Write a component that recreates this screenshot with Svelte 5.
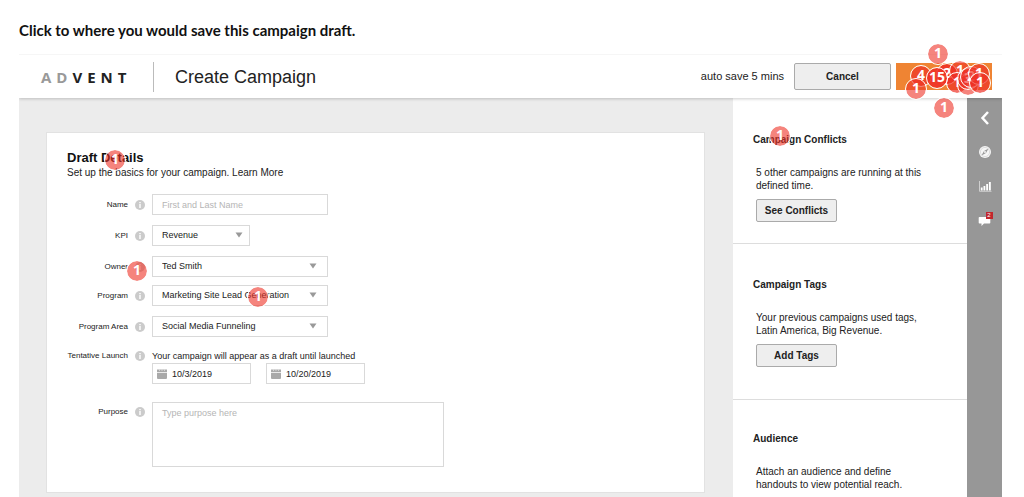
<script>
  const selects = [
    { id: 'kpi', label: 'KPI', value: 'Revenue', size: 'short', gap: 'g10' },
    { id: 'owner', label: 'Owner', value: 'Ted Smith', size: 'long', gap: 'g10' },
    { id: 'program', label: 'Program', value: 'Marketing Site Lead Generation', size: 'long', gap: 'g8' },
    { id: 'area', label: 'Program Area', value: 'Social Media Funneling', size: 'long', gap: 'g10' }
  ];

  // Click clusters: centre inside the frame, number of clicks, fill strength
  const clicks = [
    { x: 919, y: 0, n: 1, o: 0.6 },
    { x: 925, y: 54, n: 1, o: 0.6 },
    { x: 761, y: 82, n: 1, o: 0.6 },
    { x: 96, y: 106, n: 1, o: 0.6 },
    { x: 118, y: 217, n: 1, o: 0.6 },
    { x: 239, y: 243, n: 1, o: 0.6 },
    { x: 928, y: 20, n: 2, o: 0.9 },
    { x: 941, y: 17, n: 1, o: 0.6 },
    { x: 938, y: 29, n: 1, o: 0.7 },
    { x: 949, y: 31, n: 1, o: 0.6 },
    { x: 949, y: 25, n: 3, o: 0.7 },
    { x: 952, y: 23, n: 2, o: 0.6 },
    { x: 960, y: 20, n: 1, o: 0.7 },
    { x: 902, y: 22, n: 4, o: 0.7 },
    { x: 918, y: 24, n: 15, o: 0.9 },
    { x: 897, y: 35, n: 1, o: 0.6 },
    { x: 961, y: 29, n: 1, o: 0.7 }
  ];
</script>

{#snippet info()}
  <svg class="info" viewBox="0 0 10 10" aria-hidden="true">
    <circle cx="5" cy="5" r="5" fill="#cbcbcb" />
    <path d="M4.300 2h1.400v1.300H4.300zM4.300 4h1.400v4H4.300z" fill="#fff" />
  </svg>
{/snippet}

{#snippet calendar()}
  <svg class="calendar" viewBox="0 0 10 10" aria-hidden="true">
    <path d="M0 .5h10V3H0zM0 3.700h10V9a1 1 0 0 1-1 1H1a1 1 0 0 1-1-1z" fill="#a9a9a9" />
    <path d="M2.500 0v2M5 0v2M7.500 0v2" stroke="#ddd" stroke-width=".8" />
  </svg>
{/snippet}

<div class="page">
  <h1>Click to where you would save this campaign draft.</h1>

  <div class="frame">
    <header>
      <div class="logo"><span>AD</span>VENT</div>
      <h2>Create Campaign</h2>
      <span class="autosave">auto save 5 mins</span>
      <button class="cancel">Cancel</button>
      <button class="save" aria-label="Save"></button>
    </header>

    <div class="body">
      <main>
        <form class="card">
          <h3>Draft Details</h3>
          <p class="intro">Set up the basics for your campaign. <a href="#learn">Learn More</a></p>

          <div class="row">
            <label for="name">Name</label>
            {@render info()}
            <input id="name" class="long" type="text" placeholder="First and Last Name" />
          </div>

          {#each selects as s}
            <div class="row {s.gap}">
              <label for={s.id}>{s.label}</label>
              {@render info()}
              <div class="select {s.size}">
                <select id={s.id}><option>{s.value}</option></select>
                <svg viewBox="0 0 8 6" aria-hidden="true"><path d="M.5.5h7L4 5.500z" fill="#999" /></svg>
              </div>
            </div>
          {/each}

          <div class="row top launch">
            <label for="start">Tentative Launch</label>
            {@render info()}
            <div>
              <p class="hint">Your campaign will appear as a draft until launched</p>
              <div class="dates">
                <div class="date">{@render calendar()}<input id="start" type="text" value="10/3/2019" /></div>
                <div class="date">{@render calendar()}<input type="text" aria-label="End date" value="10/20/2019" /></div>
              </div>
            </div>
          </div>

          <div class="row top purpose">
            <label for="purpose">Purpose</label>
            {@render info()}
            <textarea id="purpose" placeholder="Type purpose here"></textarea>
          </div>
        </form>
      </main>

      <aside>
        <section>
          <h4>Campaign Conflicts</h4>
          <p>5 other campaigns are running at this defined time.</p>
          <button>See Conflicts</button>
        </section>
        <section>
          <h4>Campaign Tags</h4>
          <p>Your previous campaigns used tags, Latin America, Big Revenue.</p>
          <button>Add Tags</button>
        </section>
        <section>
          <h4>Audience</h4>
          <p>Attach an audience and define handouts to view potential reach.</p>
        </section>
      </aside>

      <nav>
        <button aria-label="Collapse">
          <svg viewBox="0 0 14 14"><path d="M10 1 4.500 7l5.500 6" stroke="#fff" stroke-width="2.500" fill="none" /></svg>
        </button>
        <button aria-label="Explore">
          <svg viewBox="0 0 14 14">
            <circle cx="7" cy="7" r="6" fill="#f6f6f6" />
            <circle cx="7" cy="7" r="4.600" fill="none" stroke="#ccc" stroke-width=".6" />
            <path d="M10.500 3.500 8 8 3.500 10.500 6 6z" fill="#999" />
            <circle cx="7" cy="7" r=".9" fill="#fff" />
          </svg>
        </button>
        <button aria-label="Statistics">
          <svg viewBox="0 0 14 14">
            <path d="M1.500 2v10.300h12" stroke="#ddd" stroke-width=".8" fill="none" />
            <path d="M2.800 8.500h1.800v3H2.800zM5.500 7h1.800v4.500H5.500zM8.200 5H10v6.500H8.200zM10.900 3h1.900v8.500h-1.900z" fill="#fff" />
          </svg>
        </button>
        <button aria-label="Messages">
          <svg viewBox="0 0 14 14"><path d="M1.500 4h10a.8.8 0 0 1 .8.8v5a.8.800 0 0 1-.8.800H6l-2.500 2.400v-2.400h-2a.8.800 0 0 1-.8-.8v-5a.8.800 0 0 1 .8-.8z" fill="#fff" /></svg>
          <span class="badge">2</span>
        </button>
      </nav>
    </div>

    {#each clicks as c}
      <span class="click" style="left:{c.x}px;top:{c.y}px;--strength:{c.o}">{c.n}</span>
    {/each}
  </div>
</div>

<style>
  :global(body) { margin: 0; background: #fff; }
  .page {
    padding: 20px 22px 0 19px;
    font: 10px/13px "Liberation Sans", Arial, sans-serif;
    color: #222;
  }
  h1, h2, h3, h4, p { margin: 0; }
  h1 { font: 700 15px/20px Lato, sans-serif; color: #111; }
  button, input, select, textarea { font: inherit; color: inherit; box-sizing: border-box; margin: 0; }
  button { padding: 0; }

  .frame { position: relative; margin-top: 14px; }
  header {
    position: relative;
    display: flex;
    align-items: center;
    height: 44px;
    box-sizing: border-box;
    padding: 0 10px 0 22px;
    border-top: 1px solid #f6f6f6;
    background: #fff;
    box-shadow: 0 1px 3px rgba(0, 0, 0, 0.2);
    clip-path: inset(0 0 -6px 0);
  }
  .logo {
    width: 113px;
    box-sizing: border-box;
    border-right: 1px solid #bbb;
    font: 700 15px/30px "Open Sans", sans-serif;
    letter-spacing: 5px;
    white-space: nowrap;
  }
  .logo span { color: #999; }
  h2 { flex: 1; padding-left: 21px; font-size: 18px; line-height: 20px; font-weight: 400; }
  .autosave { font-size: 11px; }
  header button { width: 97px; height: 27px; }
  .cancel { margin-left: 10px; }
  .cancel, aside button {
    border: 1px solid #aaa;
    border-radius: 2px;
    background: #eee;
    font-weight: 700;
  }
  header .save { width: 96px; margin-left: 5px; border: 0; background: #ef8433; }

  .body { display: flex; }
  main { flex: 1; padding: 34px 28px 4px 27px; background: #ececec; }
  .card {
    height: 361px;
    box-sizing: border-box;
    padding: 17px 20px 0;
    border: 1px solid #e2e2e2;
    background: #fff;
  }
  h3 { font-size: 13px; line-height: 16px; color: #111; }
  .intro { margin-bottom: 14px; line-height: 14px; }
  .intro a { color: inherit; text-decoration: none; }
  .row { display: flex; align-items: center; }
  .row label { width: 61px; text-align: right; white-space: nowrap; font-size: 8px; line-height: 10px; }
  .info { flex: none; width: 10px; height: 10px; margin: 0 7px; }
  .g8 { margin-top: 8px; }
  .g10 { margin-top: 10px; }
  .long { width: 176px; }
  .short { width: 98px; }
  input, select, textarea {
    height: 21px;
    padding: 0 9px;
    border: 1px solid #d9d9d9;
    border-radius: 0;
    background: #fff;
    font-size: 9px;
    outline: 0;
  }
  ::placeholder { color: #b5b5b5; opacity: 1; }
  .select { position: relative; display: flex; }
  select { width: 100%; appearance: none; }
  .select svg { position: absolute; right: 11px; top: 7px; width: 8px; height: 6px; }
  .short svg { right: 7px; }
  .top { align-items: flex-start; }
  .top label, .top .info { margin-top: 1px; }
  .launch { margin-top: 13px; }
  .hint { height: 13px; font-size: 9px; line-height: 12px; }
  .dates { display: flex; gap: 15px; }
  .date { display: flex; align-items: center; width: 99px; height: 21px; box-sizing: border-box; padding-left: 4px; border: 1px solid #d9d9d9; }
  .date input { flex: 1; min-width: 0; height: 19px; padding: 0 0 0 5px; border: 0; }
  .calendar { width: 10px; height: 10px; }
  .purpose { margin-top: 18px; }
  .purpose label, .purpose .info { margin-top: 5px; }
  textarea { width: 292px; height: 65px; padding: 4px 9px; resize: none; line-height: 13px; }

  aside { width: 234px; background: #fff; }
  section { height: 156px; box-sizing: border-box; padding: 34px 40px 0 20px; border-bottom: 1px solid #ddd; }
  section:first-child { height: 146px; padding-top: 35px; }
  section:last-child { height: 97px; padding-right: 60px; padding-top: 32px; border: 0; }
  h4 { font-size: 10px; line-height: 13px; white-space: nowrap; }
  section p { margin: 20px 0 0 3px; }
  aside button { width: 81px; height: 23px; margin: 7px 0 0 3px; }

  nav { display: flex; flex-direction: column; align-items: center; width: 35px; gap: 20px; box-sizing: border-box; padding-top: 13px; background: #979797; }
  nav button { position: relative; display: flex; width: 14px; height: 14px; border: 0; background: none; }
  nav svg { width: 14px; height: 14px; }
  .badge { position: absolute; right: -1px; top: -1px; width: 7px; background: #c1272d; color: #fff; font-size: 6px; line-height: 7px; text-align: center; }

  .click {
    position: absolute;
    width: 20px;
    height: 20px;
    margin: -11px 0 0 -11px;
    border: 1px solid #fff;
    border-radius: 50%;
    background: rgb(238 50 38 / var(--strength)) padding-box;
    color: #fff;
    font: 700 14px/18px "Open Sans", sans-serif;
    text-align: center;
    pointer-events: none;
  }
</style>
